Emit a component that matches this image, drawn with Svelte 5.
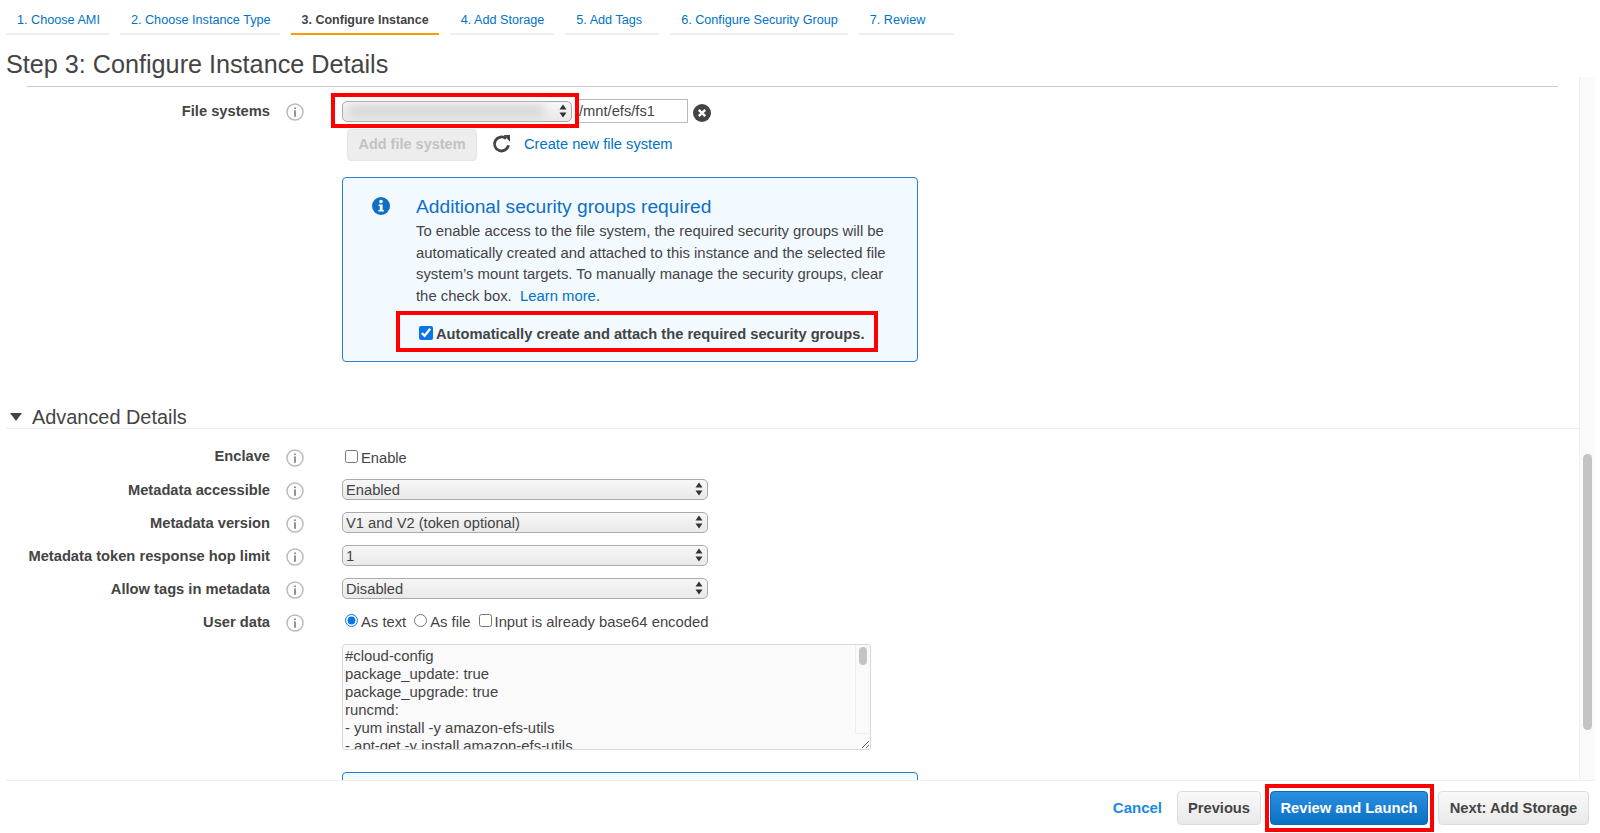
<script>
	const tabs = [
		'1. Choose AMI',
		'2. Choose Instance Type',
		'3. Configure Instance',
		'4. Add Storage',
		'5. Add Tags',
		'6. Configure Security Group',
		'7. Review'
	];
	const active = 2;

	const selects = [
		{ label: 'Metadata accessible', value: 'Enabled' },
		{ label: 'Metadata version', value: 'V1 and V2 (token optional)' },
		{ label: 'Metadata token response hop limit', value: '1' },
		{ label: 'Allow tags in metadata', value: 'Disabled' }
	];

	const userData =
		'#cloud-config\npackage_update: true\npackage_upgrade: true\nruncmd:\n- yum install -y amazon-efs-utils\n- apt-get -y install amazon-efs-utils';
</script>

{#snippet info()}
	<svg class="info" viewBox="0 0 18 18" width="18" height="18">
		<circle cx="9" cy="9" r="8" fill="#fff" stroke="#bbb" stroke-width="1.5" />
		<circle cx="9" cy="5.2" r="1" fill="#888" />
		<rect x="8.1" y="7.4" width="1.8" height="6.4" fill="#888" />
	</svg>
{/snippet}

{#snippet arrows()}
	<svg class="arrows" viewBox="0 0 8 14" width="8" height="14">
		<path d="M4 0.5 L7.5 5.5 H0.5 Z M4 13.5 L0.5 8.5 H7.5 Z" fill="#333" />
	</svg>
{/snippet}

<div class="page">
	<nav class="tabs">
		{#each tabs as tab, i}
			<a class="tab" class:active={i === active} href="#top">{tab}</a>
		{/each}
	</nav>
	<h1>Step 3: Configure Instance Details</h1>

	<div class="middle">
		<div class="content">
			<hr />

			<div class="row first">
				<div class="label">File systems</div>
				<div class="help">{@render info()}</div>
				<div class="control">
					<div class="mark mark-select">
						<div class="select fs">
							<select aria-label="File system"><option></option></select>
							<span class="blur"></span>
							{@render arrows()}
						</div>
					</div>
					<input class="path" type="text" value="/mnt/efs/fs1" />
					<svg class="remove" viewBox="0 0 18 18" width="18" height="18">
						<circle cx="9" cy="9" r="9" fill="#444" />
						<path d="M5.8 5.8 L12.2 12.2 M12.2 5.8 L5.8 12.2" stroke="#fff" stroke-width="2.4" />
					</svg>
				</div>
			</div>

			<div class="add-row">
				<button class="disabled">Add file system</button>
				<svg class="refresh" viewBox="0 0 20 20" width="20" height="20">
					<path d="M16.4 11.2 A7 7 0 1 1 14 4.6" fill="none" stroke="#444" stroke-width="2.8" />
					<path d="M11.6 1 L18 1 L18 7.8 Z" fill="#444" />
				</svg>
				<a class="create" href="#top">Create new file system</a>
			</div>

			<section class="notice">
				<svg class="notice-icon" viewBox="0 0 18 18" width="18" height="18">
					<circle cx="9" cy="9" r="9" fill="#0f6fc6" />
					<circle cx="9" cy="4.6" r="1.8" fill="#fff" />
					<path d="M6.6 7.4 H10.6 V13 H11.8 V14.6 H6.4 V13 H7.8 V9 H6.6 Z" fill="#fff" />
				</svg>
				<h2>Additional security groups required</h2>
				<p>
					To enable access to the file system, the required security groups will be<br />
					automatically created and attached to this instance and the selected file<br />
					system’s mount targets. To manually manage the security groups, clear<br />
					the check box.&nbsp; <a href="#top">Learn more</a>.
				</p>
				<label class="mark mark-check">
					<input type="checkbox" checked />
					<b>Automatically create and attach the required security groups.</b>
				</label>
			</section>

			<h3 class="advanced">
				<svg viewBox="0 0 12 8" width="12" height="8"><path d="M0 0 H12 L6 8 Z" fill="#444" /></svg>
				Advanced Details
			</h3>

			<div class="row enclave">
				<div class="label">Enclave</div>
				<div class="help">{@render info()}</div>
				<label class="control check">
					<input type="checkbox" />
					Enable
				</label>
			</div>

			{#each selects as item}
				<div class="row">
					<div class="label">{item.label}</div>
					<div class="help">{@render info()}</div>
					<div class="control">
						<div class="select wide">
							<select aria-label={item.label}><option>{item.value}</option></select>
							{@render arrows()}
						</div>
					</div>
				</div>
			{/each}

			<div class="row">
				<div class="label">User data</div>
				<div class="help">{@render info()}</div>
				<div class="control check options">
					<label><input type="radio" name="ud" checked /> As text</label>
					<label><input type="radio" name="ud" /> As file</label>
					<label><input type="checkbox" /> Input is already base64 encoded</label>
				</div>
			</div>

			<div class="user-data">
				<textarea readonly value={userData}></textarea>
				<div class="ta-track"><div class="ta-thumb"></div></div>
			</div>

			<section class="notice next"></section>
		</div>

		<div class="track"><div class="thumb"></div></div>
	</div>

	<footer>
		<a class="cancel" href="#top">Cancel</a>
		<button>Previous</button>
		<div class="mark mark-primary"><button class="primary">Review and Launch</button></div>
		<button>Next: Add Storage</button>
	</footer>
</div>

<style>
	:global(body) {
		background: #fff;
	}

	.page {
		height: 833px;
		display: flex;
		flex-direction: column;
		overflow: hidden;
		font-family: 'Liberation Sans', Arial, sans-serif;
		font-size: 14.7px;
		color: #444;
	}

	a {
		color: #0073c6;
		text-decoration: none;
	}

	.tabs {
		display: flex;
		gap: 11px;
		padding-left: 6px;
	}

	.tab {
		height: 33px;
		line-height: 40px;
		padding: 0 10px 0 11px;
		font-size: 12.65px;
		white-space: nowrap;
		border-bottom: 2px solid #eee;
	}

	.tab:nth-child(1),
	.tab:nth-child(2) {
		padding-right: 9px;
	}

	.tab:nth-child(5) {
		padding-right: 17px;
	}

	.tab:last-child {
		padding-right: 29px;
	}

	.tab.active {
		color: #444;
		font-weight: bold;
		font-size: 12.5px;
		border-bottom-color: #f90;
	}

	h1 {
		margin: 0;
		height: 42px;
		line-height: 58px;
		padding-left: 6px;
		font-size: 25.2px;
		font-weight: normal;
		white-space: nowrap;
	}

	.middle {
		flex: 1;
		min-height: 0;
		display: flex;
	}

	.content {
		flex: 1;
		min-width: 0;
		overflow: hidden;
	}

	hr {
		height: 1px;
		margin: 9px 21px 0 27px;
		border: 0;
		background: #ccc;
	}

	.track {
		width: 15px;
		margin-right: 5px;
		border-left: 1px solid #eee;
		background: #fafafa;
	}

	.thumb {
		width: 9px;
		height: 276px;
		margin: 377px 0 0 3px;
		border-radius: 5px;
		background: #c4c4c4;
	}

	.row {
		display: grid;
		grid-template-columns: 270px 72px 1fr;
		align-items: center;
		height: 33px;
	}

	.row.first {
		height: 35px;
		margin-top: 6px;
	}

	.row.enclave {
		margin-top: 11px;
	}

	.enclave .label {
		margin-top: -2px;
	}

	.label {
		text-align: right;
		font-weight: bold;
		white-space: nowrap;
	}

	.help {
		padding: 2px 0 0 16px;
		line-height: 0;
	}

	.control {
		display: flex;
		align-items: center;
	}

	.mark {
		border: 4px solid #f00;
	}

	.mark-select {
		margin-left: -11px;
		padding: 4px 3px 2px 7px;
	}

	.select {
		position: relative;
		height: 21px;
	}

	.select.fs {
		width: 230px;
	}

	.select.wide {
		width: 366px;
	}

	select {
		appearance: none;
		display: block;
		width: 100%;
		height: 100%;
		padding: 0 0 0 3px;
		border: 1px solid #aaa;
		border-radius: 5px;
		background: linear-gradient(#f7f7f7, #e9e9e9);
		font: inherit;
		color: #444;
	}

	.arrows {
		position: absolute;
		top: 3px;
		right: 5px;
		pointer-events: none;
	}

	.blur {
		position: absolute;
		top: 4px;
		left: 6px;
		width: 196px;
		height: 12px;
		background: #d6d6d6;
		filter: blur(5px);
	}

	.path {
		box-sizing: border-box;
		width: 109px;
		height: 24px;
		padding: 0;
		border: 1px solid #bbb;
		border-left: 0;
		font: inherit;
		color: #444;
		margin-top: 1px;
	}

	.remove {
		margin: 5px 0 0 5px;
	}

	.add-row {
		display: flex;
		align-items: center;
		height: 32px;
		margin: 1px 0 0 347px;
	}

	button {
		height: 34px;
		padding: 0;
		border: 1px solid #ddd;
		border-radius: 4px;
		background: linear-gradient(#f9f9f9, #e9e9e9);
		font: bold 14.7px 'Liberation Sans', Arial, sans-serif;
		color: #444;
	}

	.disabled {
		width: 130px;
		height: 32px;
		padding-bottom: 2px;
		border-color: #e6e6e6;
		font-size: 14.5px;
		color: #c2c2c2;
		background: #ededed;
	}

	.refresh {
		margin: -3px 12px 0 15px;
	}

	.create {
		margin-top: -3px;
	}

	.notice {
		position: relative;
		box-sizing: border-box;
		width: 576px;
		height: 185px;
		margin: 16px 0 0 342px;
		padding: 17px 0 0 73px;
		border: 1px solid #2a7fd0;
		border-radius: 4px;
		background: #f2f9ff;
	}

	.notice-icon {
		position: absolute;
		top: 19px;
		left: 29px;
	}

	h2 {
		margin: 0;
		font-size: 19.2px;
		line-height: 24px;
		font-weight: normal;
		color: #0f6fc6;
	}

	p {
		margin: 2px 0 0;
		font-size: 14.85px;
		line-height: 21.7px;
		white-space: nowrap;
	}

	.mark-check {
		display: flex;
		align-items: center;
		box-sizing: border-box;
		width: 482px;
		height: 41px;
		margin: 3px 0 0 -20px;
		padding: 6px 0 0 19px;
	}

	.mark-check input {
		margin: 0 3px 2px 0;
		width: 14px;
		height: 14px;
		accent-color: #0a76e6;
	}

	.advanced {
		display: flex;
		align-items: center;
		gap: 10px;
		height: 21px;
		margin: 43px 0 0 6px;
		padding: 2px 0 0 4px;
		border-bottom: 1px solid #eee;
		font-size: 19.9px;
		font-weight: normal;
		line-height: 21px;
	}

	.advanced svg {
		margin-top: -2px;
	}

	.check {
		gap: 3px;
	}

	.check input {
		margin: 0 0 2px;
		width: 13px;
		height: 13px;
		accent-color: #0a76e6;
	}

	.enclave .check {
		padding: 2px 0 0 3px;
	}

	.options {
		gap: 8px;
		padding-left: 3px;
		font-size: 14.8px;
	}

	.options label {
		display: flex;
		align-items: center;
		gap: 3px;
		white-space: nowrap;
	}

	.user-data {
		position: relative;
		width: 529px;
		height: 106px;
		margin: 6px 0 0 342px;
	}

	textarea {
		display: block;
		box-sizing: border-box;
		width: 100%;
		height: 100%;
		padding: 2px 16px 0 2px;
		border: 1px solid #d8d8d8;
		border-radius: 3px;
		background: #fafafa;
		font: 14.9px/18px 'Liberation Sans', Arial, sans-serif;
		color: #444;
		resize: both;
		overflow: hidden;
	}

	.ta-track {
		position: absolute;
		top: 1px;
		right: 1px;
		bottom: 16px;
		width: 14px;
		border-left: 1px solid #eee;
		border-bottom: 1px solid #eee;
	}

	.ta-thumb {
		width: 8px;
		height: 18px;
		margin: 2px 0 0 3px;
		border-radius: 4px;
		background: #c4c4c4;
	}

	.notice.next {
		margin-top: 22px;
	}

	footer {
		box-sizing: border-box;
		display: flex;
		align-items: center;
		justify-content: flex-end;
		height: 53px;
		margin: 0 5px 0 6px;
		padding: 1px 6px 0 0;
		border-top: 1px solid #eee;
	}

	.cancel {
		margin-right: 15px;
		font-weight: bold;
		font-size: 15px;
		color: #1a8ae0;
	}

	footer > button {
		width: 84px;
	}

	footer > button:last-child {
		width: 151px;
		margin-left: 4px;
	}

	.mark-primary {
		margin-left: 4px;
		padding: 3px 2px 3px 1px;
		line-height: 0;
	}

	.primary {
		width: 158px;
		border-color: #0a6bbd;
		background: linear-gradient(#2a8fe0, #0a70c4);
		color: #fff;
	}
</style>
